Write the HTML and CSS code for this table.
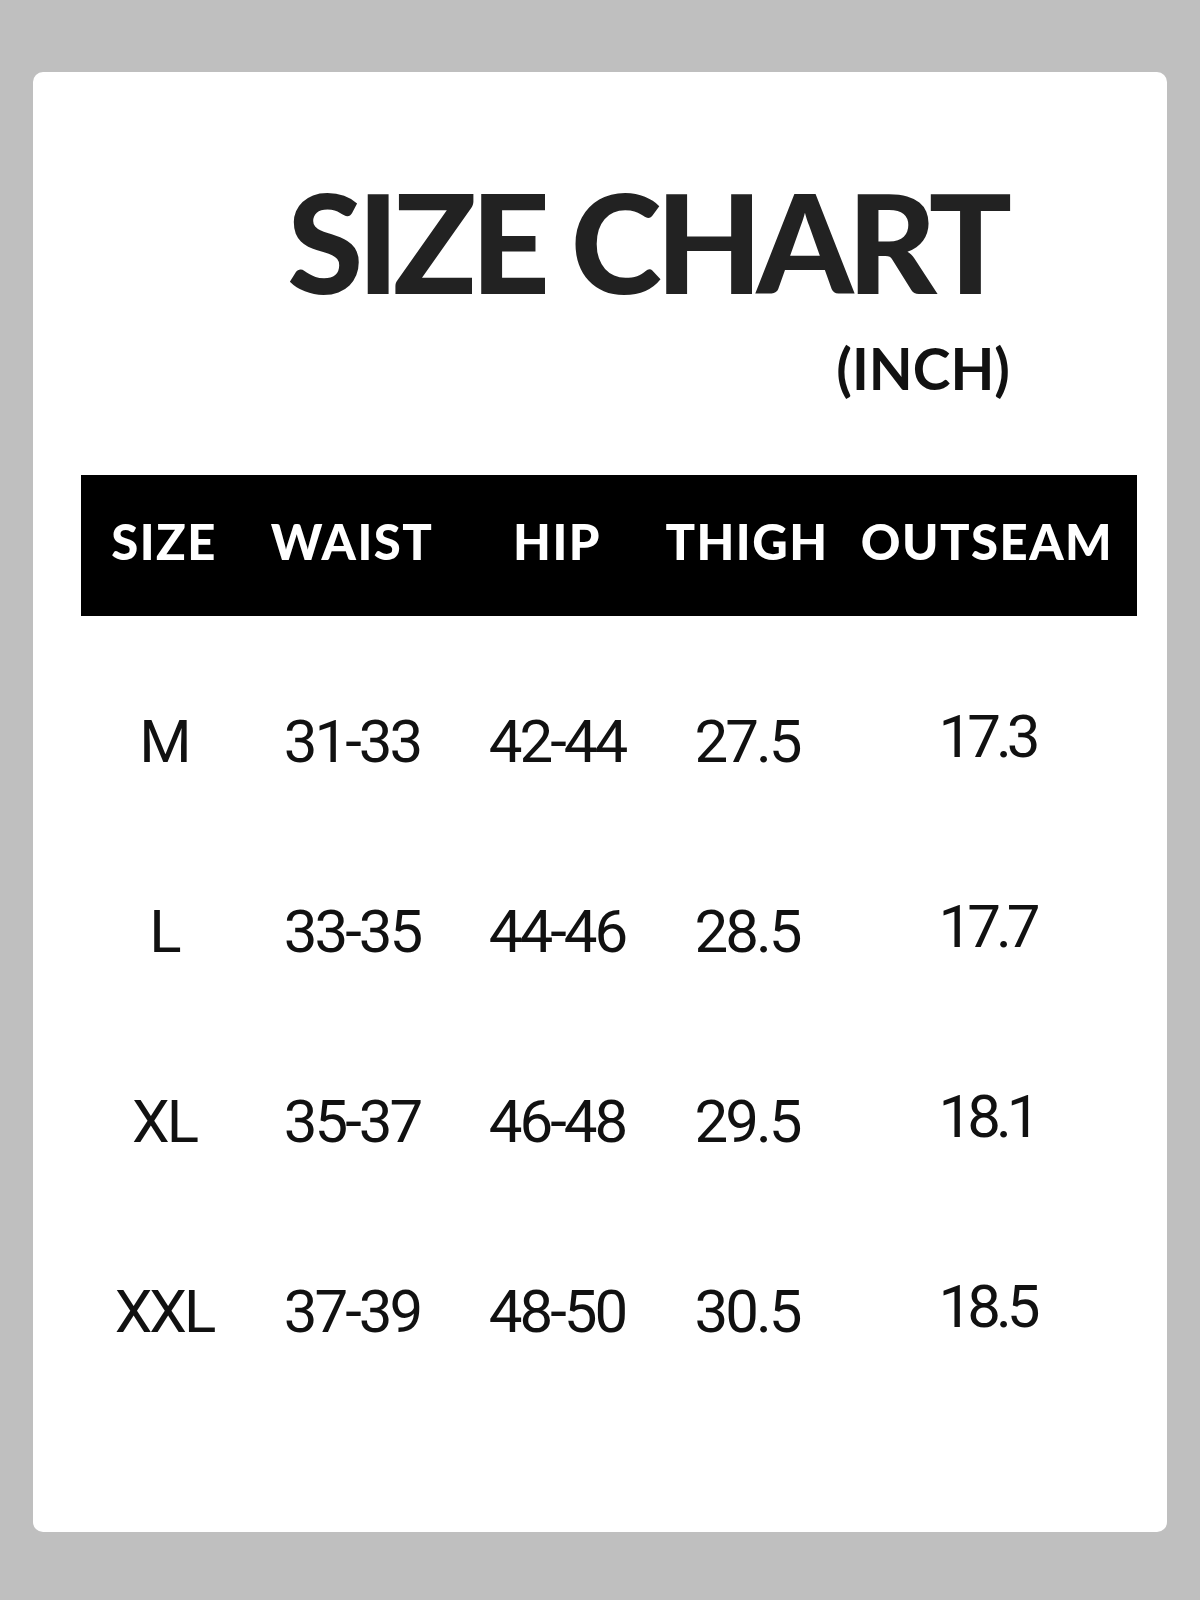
FILE: index.html
```html
<!DOCTYPE html>
<html lang="en">
<head>
<meta charset="utf-8">
<title>Size Chart</title>
<link rel="stylesheet" href="styles.css">
</head>
<body>
<main class="card">
  <header class="heading">
    <h1 class="title">SIZE CHART</h1>
    <p class="unit">(INCH)</p>
  </header>
  <section class="chart">
    <div class="head-row">
      <span>SIZE</span><span>WAIST</span><span>HIP</span><span>THIGH</span><span>OUTSEAM</span>
    </div>
    <div class="body-rows">
      <div class="row"><span>M</span><span>31-33</span><span>42-44</span><span>27.5</span><span class="out">17.3</span></div>
      <div class="row"><span>L</span><span>33-35</span><span>44-46</span><span>28.5</span><span class="out">17.7</span></div>
      <div class="row"><span>XL</span><span>35-37</span><span>46-48</span><span>29.5</span><span class="out">18.1</span></div>
      <div class="row"><span>XXL</span><span>37-39</span><span>48-50</span><span>30.5</span><span class="out">18.5</span></div>
    </div>
  </section>
</main>
</body>
</html>
```
FILE: styles.css
```css
html, body {
  margin: 0;
  padding: 0;
}
body {
  background: #bfbfbf;
  width: 1200px;
  height: 1600px;
  padding-top: 72px;
  box-sizing: border-box;
}
.card {
  margin: 0 33px;
  height: 1460px;
  background: #fff;
  border-radius: 10px;
  box-sizing: border-box;
  padding-top: 100px;
}
.heading {
  text-align: right;
  padding-right: 157px;
}
.title {
  margin: 0;
  padding-right: 4px;
  font-family: "Lato", sans-serif;
  font-weight: 900;
  font-size: 138px;
  line-height: 138px;
  letter-spacing: -6px;
  color: #222;
}
.unit {
  margin: 28px 0 0 0;
  font-family: "Lato", sans-serif;
  font-weight: 700;
  font-size: 57px;
  line-height: 60px;
  color: #111;
}
.chart {
  margin: 77px 30px 0 48px;
}
.head-row,
.row {
  display: grid;
  grid-template-columns: 166px 210px 200px 180px 300px;
  align-items: center;
  text-align: center;
}
.head-row {
  height: 141px;
  box-sizing: border-box;
  padding-bottom: 10px;
  background: #000;
  color: #fff;
  font-family: "Lato", sans-serif;
  font-weight: 900;
  font-size: 49px;
  letter-spacing: 1.5px;
}
.body-rows {
  padding-top: 30px;
}
.row {
  height: 190px;
  font-family: "Roboto", sans-serif;
  font-weight: 400;
  font-size: 60px;
  letter-spacing: -3px;
  color: #111;
}
.row .out {
  position: relative;
  top: -5px;
  letter-spacing: -5px;
}
```
